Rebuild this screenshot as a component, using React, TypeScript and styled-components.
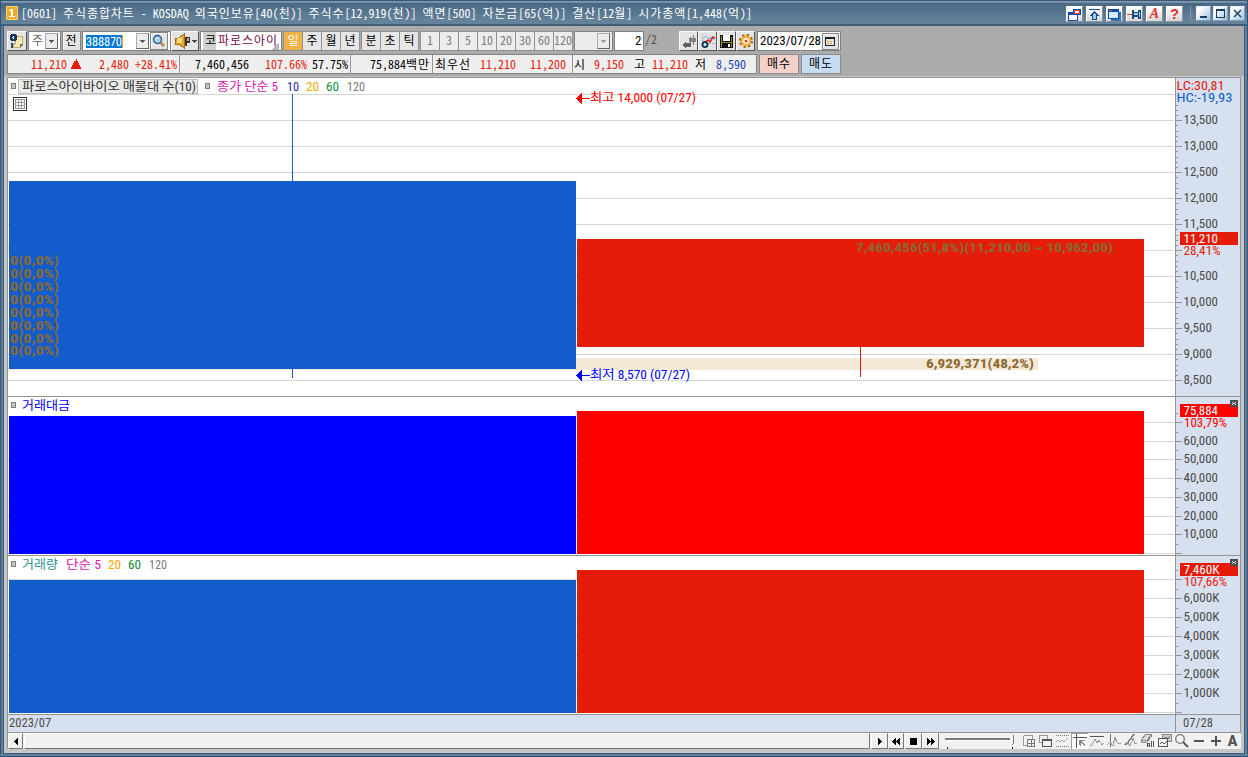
import React from 'react';
import styled, { createGlobalStyle, css } from 'styled-components';

const MONO = '"Noto Sans Mono CJK KR", "Noto Sans CJK KR", monospace';
const COND = '"Roboto Condensed", Roboto, "Noto Sans CJK KR", sans-serif';
const RED = '#e61c0a';
const BLUE = '#125ccb';

const GlobalStyle = createGlobalStyle`
  * { box-sizing: border-box; }
  body { margin: 0; overflow: hidden; font: 12px/18px ${MONO}; color: #000; }
  svg { display: block; flex: none; }
  svg text { font-family: ${COND}; font-size: 12.5px; white-space: pre; }
`;

/* ---------- window ---------- */
const Window = styled.div`
  width: 1248px;
  height: 757px;
  display: flex;
  flex-direction: column;
  padding: 0 4px 4px 4px;
  background: linear-gradient(90deg, #35536f 0, #35536f 1px, #5f7e99 1px, #5f7e99 3px, #3f5d79 3px, #3f5d79 1245px, #5f7e99 1245px, #5f7e99 1247px, #35536f 1247px);
  box-shadow: inset 0 -1px #35536f, inset 0 -3px #5f7e99;
`;
const TitleBar = styled.header`
  height: 26px;
  margin: 0 -3px;
  padding: 5px 3px 0 5px;
  flex: none;
  display: flex;
  background: linear-gradient(180deg, #3c5772 0, #3c5772 1px, #8299b0 1px, #6f8aa4 3px, #486783 3px, #648299 20px, #64839b 24px, #3f5e79 24px);
`;
const TitleText = styled.h1`
  margin: -1px auto 0 3px;
  font: 12px/18px ${MONO};
  color: #fff;
  white-space: pre;
`;
const TitleButtons = styled.div`
  display: flex;
  gap: 3px;
  padding-top: 1px;
`;
const TitleButton = styled.button`
  width: 17px;
  height: 16px;
  padding: 0;
  display: grid;
  place-items: center;
  border: 1px solid #fff;
  border-right-color: #8a9299;
  border-bottom-color: #8a9299;
  background: linear-gradient(#fff, #d4d6d8);
`;
const TitleGlyph = styled.b<{ $italic?: boolean }>`
  color: #e8302a;
  font: ${p => (p.$italic ? 'italic' : 'normal')} bold ${p => (p.$italic ? 14 : 15)}px/14px ${p => (p.$italic ? '"Liberation Serif", serif' : '"Liberation Sans", sans-serif')};
`;
const TitleSeparator = styled.i`
  width: 1px;
  height: 14px;
  margin: 0 2px 0 4px;
  background: #8d9aa6;
`;
const SystemButton = styled(TitleButton)`
  width: 15px;
  height: 15px;
  margin-right: -1px;
  background: linear-gradient(135deg, #fff 20%, #9fc0dd);
  border-color: #e6f0f8 #7f9db8 #7f9db8 #e6f0f8;
`;
const Body = styled.main`
  flex: 1;
  min-height: 0;
  display: flex;
  flex-direction: column;
  background: #c6c6c6;
`;

/* ---------- toolbars ---------- */
const Toolbars = styled.div`
  height: 50px;
  padding: 5px 3px 0;
  display: flex;
  flex-direction: column;
  gap: 3px;
  background: #ababab;
`;
const Toolbar = styled.div`
  height: 20px;
  display: flex;
`;
const bevel = css`
  border: 1px solid #f8f8f8;
  border-right-color: #555;
  border-bottom-color: #555;
`;
const IconButton = styled.button<{ $w?: number; $h?: number; $ml?: number; $plain?: boolean }>`
  width: ${p => p.$w ?? 19}px;
  height: ${p => p.$h ?? 20}px;
  flex: none;
  margin-left: ${p => p.$ml ?? 0}px;
  padding: 0;
  display: flex;
  align-items: center;
  justify-content: center;
  background: #e4e4e4;
  ${p => (p.$plain ? css`border: 1px solid #858585; box-shadow: inset 1px 1px #f5f5f5;` : bevel)}
`;
const Field = styled.div<{ $w: number; $ml?: number; $bg?: string }>`
  width: ${p => p.$w}px;
  height: 20px;
  flex: none;
  margin-left: ${p => p.$ml ?? 0}px;
  padding: 0 2px;
  display: flex;
  align-items: center;
  background: ${p => p.$bg ?? '#fff'};
  border: 1px solid #808080;
  white-space: nowrap;
`;
const DropButton = styled.button`
  width: 13px;
  height: 16px;
  margin-left: auto;
  padding: 0;
  display: grid;
  place-items: center;
  background: #ececec;
  border: 1px solid #aaa;
  border-right-color: #666;
  border-bottom-color: #666;
`;
const TextBase = styled.span<{ $c?: string; $ml?: number; $cond?: boolean }>`
  color: ${p => p.$c ?? '#000'};
  margin-left: ${p => p.$ml ?? 0}px;
  padding-bottom: 2px;
  font: 12px/16px ${MONO};
  ${p => p.$cond && css`font-family: ${COND}; font-size: 13px; padding-bottom: 1px;`}
`;
const FullWidth = styled.span`
  letter-spacing: 0.92px;
`;
const Selected = styled.span`
  width: 37px;
  height: 13px;
  margin-left: 1px;
  background: #0078d7;
  color: #fff;
  font: 12.5px/14px ${COND};
  letter-spacing: -0.2px;
  border-right: 1px solid #ff9a3c;
`;
const Market = styled.span`
  width: 16px;
  height: 18px;
  margin-right: 2px;
  padding-left: 2px;
  background: #d0d0d0;
  line-height: 16px;
`;
const StockName = styled.span`
  width: 61px;
  height: 18px;
  flex: none;
  color: #7a0a46;
  line-height: 16px;
  background: linear-gradient(135deg, transparent 0, transparent calc(100% - 5px), #b8b8b8 calc(100% - 5px));
`;
const Tabs = styled.div<{ $ml: number }>`
  display: flex;
  margin-left: ${p => p.$ml}px;
  border: 1px solid #8f8f8f;
  border-right-width: 0;
`;
const Tab = styled.button<{ $on?: boolean; $off?: boolean }>`
  width: 19px;
  height: 18px;
  padding: 0 0 3px;
  border: 0;
  border-right: 1px solid #909090;
  background: ${p => (p.$on ? '#f0b146' : p.$off ? '#ececec' : '#e6e6e6')};
  color: ${p => (p.$on ? '#fff' : p.$off ? '#7d7d7d' : '#000')};
  font: 12px/15px ${MONO};
  white-space: nowrap;
`;
const Quote = styled.div`
  display: flex;
  width: 750px;
  border: 1px solid #858585;
  background: #efefef;
  white-space: nowrap;
  ${TextBase} { padding-bottom: 0; }
`;
const QuoteCell = styled.div<{ $w: number }>`
  width: ${p => p.$w}px;
  display: flex;
  align-items: center;
  flex: none;
  & + & { border-left: 1px solid #959595; }
`;
const OrderButton = styled.button<{ $bg: string; $ml: number }>`
  width: 40px;
  height: 20px;
  margin-left: ${p => p.$ml}px;
  padding: 0 0 2px;
  border: 1px solid #8c8c8c;
  background: ${p => p.$bg};
  font: 12px/16px ${MONO};
`;

/* ---------- chart ---------- */
const Chart = styled.section`
  margin: 1px 3px 0;
  width: 1234px;
  border: 1px solid #949494;
  border-bottom: 0;
  display: flex;
  flex-direction: column;
`;
const Panel = styled.div`
  display: grid;
  grid-template-columns: 1167px 65px;
  border-bottom: 1px solid #949494;
  background: #fff;
`;
const Axis = styled.div`
  border-left: 1px solid #949494;
  background: #d6e0ee;
`;
const DateStrip = styled.div`
  height: 18px;
  display: grid;
  grid-template-columns: 1167px 65px;
  border-bottom: 1px solid #949494;
  background: #d6e0ee;
  font: 12.5px/15px ${COND};
  color: #4b4b4b;
`;
const DateCell = styled.div<{ $line?: boolean }>`
  padding-left: ${p => (p.$line ? 7 : 1)}px;
  letter-spacing: ${p => (p.$line ? 0.15 : 0.1)}px;
  ${p => p.$line && css`border-left: 1px solid #949494;`}
`;

/* ---------- bottom bar ---------- */
const BottomBar = styled.footer`
  width: 1234px;
  height: 16px;
  margin: 0 3px;
  display: flex;
  background: #f1f1f1;
  border-left: 1px solid #949494;
`;
const ScrollButton = styled.button<{ $w: number; $ml?: number }>`
  width: ${p => p.$w}px;
  height: 16px;
  flex: none;
  margin-left: ${p => p.$ml ?? 0}px;
  padding: 0;
  display: grid;
  place-items: center;
  background: #f0f0f0;
  border: 1px solid #fff;
  border-right-color: #777;
  border-bottom-color: #777;
`;
const Thumb = styled.div`
  width: 846px;
  height: 16px;
  flex: none;
  margin-left: 1px;
  background: #f0f0f0;
  border: 1px solid #fff;
  border-right-color: #777;
  border-bottom-color: #777;
`;
const ToolButton = styled.button<{ $on?: boolean }>`
  width: 17px;
  height: 16px;
  flex: none;
  padding: 0;
  border: 0;
  display: grid;
  place-items: center;
  background: ${p => (p.$on ? '#fff' : 'transparent')};
  box-shadow: ${p => (p.$on ? 'inset 1px 1px #9a9a9a' : 'none')};
`;

/* ---------- drawings ---------- */
const Icon = ({ s = 15, h, children }: { s?: number; h?: number; children: React.ReactNode }) => (
  <svg width={s} height={h ?? s} viewBox={`0 0 ${s} ${h ?? s}`} fill="none" shapeRendering="crispEdges">{children}</svg>
);
const Arrow = ({ c = '#555' }: { c?: string }) => <Icon s={5} h={3}><path d="M0 0h5v1H4v1H3v1H2V2H1V1H0z" fill={c} /></Icon>;

const Mixed = ({ children }: { children: string }) => (
  <>{children.split(/([가-힣]+)/).map((part, i) => (i % 2 ? <FullWidth key={i}>{part}</FullWidth> : part))}</>
);
const Text = ({ children, ...rest }: { $c?: string; $ml?: number; $cond?: boolean; children: string }) => (
  <TextBase {...rest}><Mixed>{children}</Mixed></TextBase>
);

const Label = ({ x, y, w, c, bold, children }: { x: number; y: number; w: number; c: string; bold?: boolean; children: string }) => (
  <text x={x} y={y} textLength={w} lengthAdjust="spacingAndGlyphs" fill={c} fontWeight={bold ? 700 : 400}>{children}</text>
);
const Bullet = ({ x, y }: { x: number; y: number }) => <rect x={x + 0.5} y={y + 0.5} width="4" height="5" fill="#c4c4c4" stroke="#7c7c7c" />;
const Grid = ({ ys }: { ys: number[] }) => (
  <g fill="#d5d5d5">{ys.map(y => <rect key={y} x="8" y={y} width="1166" height="1" />)}</g>
);
const Ticks = ({ major, minor }: { major: number[]; minor: number[] }) => (
  <g fill="#949494">
    {major.map(y => <rect key={y} x="1176" y={y} width="6" height="1" />)}
    {minor.map(y => <rect key={y} x="1176" y={y} width="2" height="1" />)}
  </g>
);
const CloseBox = ({ y }: { y: number }) => (
  <g>
    <rect x="1230" y={y} width="8" height="7" fill="#4c4c50" />
    <path d={`M1232 ${y + 2}h1v1h2v-1h1v1h-1v1h1v1h-1v-1h-2v1h-1v-1h1v-1h-1z`} fill="#e8edf5" />
  </g>
);

const priceYs = Array.from({ length: 12 }, (_, i) => 94 + i * 26);
const priceMinor = Array.from({ length: 56 }, (_, i) => Math.round(104.6 + i * 5.2)).filter(y => y < 380 && !priceYs.includes(y));
const priceLabels: [number, string][] = [[120, '13,500'], [146, '13,000'], [172, '12,500'], [198, '12,000'], [224, '11,500'], [276, '10,500'], [302, '10,000'], [328, '9,500'], [354, '9,000'], [380, '8,500']];
const amountYs = [422, 441, 459, 478, 497, 516, 534, 553];
const amountMinor = [413, 432, 450, 469, 488, 507, 525, 544];
const volumeYs = [579, 598, 617, 636, 655, 674, 693, 712];
const volumeMinor = [570, 589, 608, 627, 646, 665, 684, 703];
const zeroYs = [265, 278, 291, 304, 317, 330, 343, 355];

const tools: React.ReactNode[] = [
  <><path d="M2.500 2.500h9v3M2.500 2.500v10h3" stroke="#999" /><path d="M6.500 6.500h7v7h-7zM10 7v7M6 10h7" stroke="#777" /></>,
  <><path d="M1.500 2.500h8v7h-8z" stroke="#999" /><path d="M4.500 6.500h9v7h-9z" fill="#f1f1f1" stroke="#555" /><path d="M4 7h9" stroke="#555" /></>,
  <><path d="M1 2.500h14M1 13.500h14" stroke="#777" strokeDasharray="1 1" /><path d="M1 9l2-2 2 2 2-2 2 2 4-4" stroke="#aaa" /></>,
  <><path d="M4.500 1v14M1 4.500h14" stroke="#555" /><path d="M7 7h6v1h-3v1h1v1h1v1h1v2h-1v-1h-1v-1h-1v-1H9v3H8v-1H7z" fill="#888" /></>,
  <><path d="M1 3.500h14" stroke="#555" /><path d="M1 13l2-1 3-6 2 4 2-3 3 5 2-2" stroke="#999" /></>,
  <><path d="M4.500 1v13" stroke="#85658a" /><path d="M1 12l3-3 3 4 2-9 2 5 2 2 2-1" stroke="#999" /></>,
  <><path d="M3 12L11 1" stroke="#85658a" strokeWidth="1.500" /><path d="M1 12l3-3 3 4 3-8 2 6 2-1" stroke="#999" /></>,
  <><path d="M6 1h5v3l-4 5H1V7z" fill="#ddd" stroke="#888" /><path d="M1 7h6l4-5M7 7v2" stroke="#888" /><path d="M7.500 10v4M9.500 10v4M7 10.500h3M7 12.500h3M11.500 8v6M13.500 8v6" stroke="#555" /></>,
  <><path d="M5.500 1.500h9v7h-9z" fill="#ccc" stroke="#888" /><path d="M6 6l3-2 2 2 2-3" stroke="#888" /><path d="M1.500 5.500h9v8h-9z" fill="#f1f1f1" stroke="#555" /><path d="M3 11l2-2 2 2 3-3" stroke="#555" /></>,
  <><circle cx="6" cy="6" r="4.300" stroke="#777" shapeRendering="auto" strokeWidth="1.300" /><path d="M9 9l5 5" stroke="#555" strokeWidth="2" shapeRendering="auto" /></>,
  <path d="M3 7h10v2H3z" fill="#555" />,
  <path d="M3 7h4V3h2v4h4v2H9v4H7V9H3z" fill="#555" />,
];
const ToolLetter = styled.b`
  font: 900 14px/16px Roboto, "Liberation Sans", sans-serif;
  color: #555;
`;

export default function App() {
  return (
    <>
      <GlobalStyle />
      <Window>
        <TitleBar>
          <svg width="12" height="16" viewBox="0 0 12 16"><path d="M.5 1.500h11v13H.5z" fill="#f0a92d" stroke="#ffd36f" /><path d="M3 5h1V4h3v7h2v1H3v-1h2V6H3z" fill="#fff" /></svg>
          <TitleText><Mixed>[0601] 주식종합차트 - KOSDAQ 외국인보유[40(천)] 주식수[12,919(천)] 액면[500] 자본금[65(억)] 결산[12월] 시가총액[1,448(억)]</Mixed></TitleText>
          <TitleButtons>
            <TitleButton><Icon s={15} h={13}><path d="M1 4h10v9H1z" fill="#0b4caa" /><path d="M2 7h8v5H2z" fill="#fff" /><path d="M6 1h8v6H6z" fill="#0b4caa" /><path d="M7 2h6v4H7z" fill="#e43b26" /><path d="M8 3h4v2H8z" fill="#fff" /></Icon></TitleButton>
            <TitleButton><Icon s={13}><path d="M1 1h11v1H1z" fill="#174b8c" /><path d="M6 3h1v1h1v1h1v1h1v1h1v1H9v4H4V8H2V7h1V6h1V5h1V4h1z" fill="#174b8c" /><path d="M6 5h1v1h1v5H5V6h1z" fill="#9bd0f2" /></Icon></TitleButton>
            <TitleButton><Icon s={15} h={13}><path d="M4 4h10v9H4z" fill="#3b6cac" /><path d="M1 1h11v10H1z" fill="#0b4caa" /><path d="M2 4h9v6H2z" fill="#d7ecfa" /><path d="M2 2h3v1H2z" fill="#f04a20" /></Icon></TitleButton>
            <TitleButton><Icon s={15} h={13}><path d="M0 6h6v1H0z" fill="#ed3b2a" /><path d="M5 2h2v2h4V2h3v9h-3V9H7v2H5z" fill="#174b7c" /><path d="M7 5h4v2H7zM12 4h1v5h-1z" fill="#9bd0f2" /></Icon></TitleButton>
            <TitleButton><TitleGlyph $italic>A</TitleGlyph></TitleButton>
            <TitleButton><TitleGlyph>?</TitleGlyph></TitleButton>
            <TitleSeparator />
            <SystemButton><Icon s={13}><path d="M3 9h7v2H3z" fill="#173c5c" /></Icon></SystemButton>
            <SystemButton><Icon s={13}><path d="M2 2h9v9H2zM3 4v6h7V4z" fillRule="evenodd" fill="#173c5c" /></Icon></SystemButton>
            <SystemButton><Icon s={13}><path d="M3 3l7 7M10 3l-7 7" stroke="#173c5c" strokeWidth="1.400" shapeRendering="auto" /></Icon></SystemButton>
          </TitleButtons>
        </TitleBar>
        <Body>
          <Toolbars>
            <Toolbar>
              <IconButton $w={20}><Icon s={16}><path d="M6 3h8v9l-3 3H4v-4l2-1z" fill="#c9a765" /><path d="M7 4h6v7l-3 3H5v-2l2-1z" fill="#fbe6b4" /><path d="M11 11h3l-3 4z" fill="#5f6f84" /><path d="M2 1h5v1h1v5H7v1H2V7H1V2h1z" fill="#123a66" /><path d="M3 4h1V3h1v3H4V5H3z" fill="#fff" /><path d="M2 10h2v5H2z" fill="#244f7c" /></Icon></IconButton>
              <Field $w={33} $ml={1}><Text $c="#666" $ml={1}>주</Text><DropButton><Arrow /></DropButton></Field>
              <IconButton $ml={1} $w={19} $plain><Text>전</Text></IconButton>
              <Field $w={89} $ml={1}>
                <Selected>388870</Selected>
                <DropButton><Arrow /></DropButton>
                <IconButton $w={18} $h={18} $ml={1} $plain><Icon s={14}><path d="M8 8l4 4" stroke="#b59058" strokeWidth="3" shapeRendering="auto" /><circle cx="5.500" cy="5.500" r="4" fill="#a9d0ee" stroke="#24598c" strokeWidth="1.300" shapeRendering="auto" /><path d="M4 4h2" stroke="#fff" /></Icon></IconButton>
              </Field>
              <IconButton $w={28}><Icon s={24} h={16}><path d="M2 5h4l5-4v14l-5-4H2z" fill="#eca42c" stroke="#a96d13" /><path d="M4 6l5-2v6H4z" fill="#ffdb83" /><path d="M12 4h5v6h-3v3h-2z" fill="#443529" /><path d="M14 5h2v3h-2z" fill="#b8aa9c" /><path d="M19 7h5v1h-1v1h-1v1h-1V9h-1V8h-1z" fill="#444" /></Icon></IconButton>
              <Field $w={82} $ml={1}><Market>코</Market><StockName><Mixed>파로스아이</Mixed></StockName></Field>
              <Tabs $ml={1}><Tab $on>일</Tab><Tab>주</Tab><Tab>월</Tab><Tab>년</Tab></Tabs>
              <Tabs $ml={1}><Tab>분</Tab><Tab>초</Tab><Tab>틱</Tab></Tabs>
              <Tabs $ml={1}>{['1', '3', '5', '10', '20', '30', '60', '120'].map(n => <Tab key={n} $off>{n}</Tab>)}</Tabs>
              <Field $w={39} $ml={1} $bg="#ececec"><DropButton><Arrow c="#999" /></DropButton></Field>
              <Field $w={30} $ml={1}><Text $ml={18} $cond>2</Text></Field>
              <Text $ml={1} $c="#555">/2</Text>
              <IconButton $ml={22}><Icon s={16}><path d="M8 5h7v4H8z" fill="#8c8c8c" /><path d="M1 12l4-4v2h5v4H5v2z" fill="#606060" /><path d="M12 2h1v10h-1zM9 4h1v6H9z" fill="#777" /></Icon></IconButton>
              <IconButton><Icon s={16}><path d="M2.500 1v9M2 10.500h13" stroke="#999" strokeDasharray="1 1" /><path d="M3 6l3-3 3 3 3-2 3 3" stroke="#6eaadc" /><path d="M5 9l3-2 2 2 3-5 2 1" stroke="#e02318" strokeWidth="1.500" shapeRendering="auto" /><circle cx="5" cy="11.500" r="2.500" fill="#fff" stroke="#12395f" strokeWidth="2" shapeRendering="auto" /></Icon></IconButton>
              <IconButton><Icon s={15}><path d="M1 1h13v13H1z" fill="#111" /><path d="M4 1h7v6H4z" fill="#fff" /><path d="M2 2h1v11H2zM12 3h1v10h-1zM3 8h9v1H3z" fill="#8b8b2a" /><path d="M9 10h2v3H9z" fill="#fff" /></Icon></IconButton>
              <IconButton><Icon s={16}><circle cx="8" cy="8" r="6" stroke="#9b5d0a" strokeWidth="2" strokeDasharray="2.400 2.312" shapeRendering="auto" /><circle cx="8" cy="8" r="4.200" fill="#fff" stroke="#f5ae38" strokeWidth="2.500" shapeRendering="auto" /><circle cx="8" cy="8" r="1.500" fill="#d54420" shapeRendering="auto" /></Icon></IconButton>
              <Field $w={84} $ml={2}>
                <Text $cond>2023/07/28</Text>
                <IconButton $w={17} $h={17} $ml={1} $plain><Icon s={11}><path d="M0 1h10v9H0zM1 3v6h8V3z" fillRule="evenodd" fill="#222" /><path d="M2 5h2v1H2zM5 5h2v1H5zM2 7h2v1H2zM5 7h2v1H5z" fill="#ed9a35" /></Icon></IconButton>
              </Field>
            </Toolbar>
            <Toolbar>
              <Quote>
                <QuoteCell $w={171}>
                  <Text $ml={23} $c={RED}>11,210</Text>
                  <Icon s={16} h={10}><path d="M9 0h1v2h1v2h1v2h1v2h1v2H4V8h1V6h1V4h1V2h2z" fill={RED} /></Icon>
                  <Text $ml={16} $c={RED}>2,480</Text><Text $ml={6} $c={RED}>+28.41%</Text>
                </QuoteCell>
                <QuoteCell $w={171}><Text $ml={15}>7,460,456</Text><Text $ml={16} $c={RED}>107.66%</Text><Text $ml={5}>57.75%</Text></QuoteCell>
                <QuoteCell $w={82}><Text $ml={19}>75,884백만</Text></QuoteCell>
                <QuoteCell $w={140}><Text $ml={2}>최우선</Text><Text $ml={9} $c={RED}>11,210</Text><Text $ml={14} $c={RED}>11,200</Text></QuoteCell>
                <QuoteCell $w={184}>
                  <Text $ml={1}>시</Text><Text $ml={8} $c={RED}>9,150</Text><Text $ml={10}>고</Text><Text $ml={6} $c={RED}>11,210</Text>
                  <Text $ml={7}>저</Text><Text $ml={9} $c="#1c47b8">8,590</Text>
                </QuoteCell>
              </Quote>
              <OrderButton $bg="#f5cfc9" $ml={2}><Mixed>매수</Mixed></OrderButton>
              <OrderButton $bg="#c6dcf2" $ml={2}><Mixed>매도</Mixed></OrderButton>
            </Toolbar>
          </Toolbars>

          <Chart>
            <Panel>
              <svg width="1167" height="318" viewBox="8 78 1167 318" shapeRendering="crispEdges">
                <Grid ys={priceYs} />
                <rect x="8" y="242" width="1" height="12" fill="#f5e8d6" />
                <rect x="8" y="358" width="1030" height="12" fill="#f5e8d6" />
                <rect x="9" y="181" width="567" height="188" fill={BLUE} />
                <rect x="292" y="94" width="1" height="284" fill={BLUE} />
                <rect x="577" y="239" width="567" height="108" fill={RED} />
                <rect x="860" y="346" width="1" height="31" fill={RED} />
                {zeroYs.map(y => <Label key={y} x={10} y={y} w={49} c="#8a6a32" bold>0(0,0%)</Label>)}
                <Label x={856} y={252} w={257} c="#8a6a32" bold>7,460,456(51,8%)(11,210,00 ~ 10,962,00)</Label>
                <Label x={926} y={368} w={108} c="#8a6a32" bold>6,929,371(48,2%)</Label>
                <Bullet x={11} y={83} />
                <rect x="18.500" y="79.500" width="179" height="14" fill="#ebebe9" stroke="#bdbdbd" />
                <Label x={22} y={91} w={174} c="#333">파로스아이바이오 매물대 수(10)</Label>
                <Bullet x={205} y={83} />
                <Label x={217} y={91} w={61} c="#d818b0">종가 단순 5</Label>
                <Label x={287} y={91} w={12} c="#1428a8">10</Label>
                <Label x={306} y={91} w={13} c="#f0a800">20</Label>
                <Label x={326} y={91} w={13} c="#0c8c38">60</Label>
                <Label x={347} y={91} w={18} c="#7c7c7c">120</Label>
                <rect x="13.500" y="97.500" width="13" height="13" fill="#fff" stroke="#333" />
                <path d="M15.500 99.500h9v9h-9zM18.500 99v10M21.500 99v10M15 102.500h10M15 105.500h10" fill="none" stroke="#999" />
                <path d="M576 98.500l6-6v5.500h8v1h-8v5.500z" fill="#f00" />
                <Label x={590} y={102} w={106} c="#f00">최고 14,000 (07/27)</Label>
                <path d="M576 375.500l6-6v5.500h8v1h-8v5.500z" fill="#00f" />
                <Label x={590} y={379} w={100} c="#00f">최저 8,570 (07/27)</Label>
              </svg>
              <Axis>
                <svg width="64" height="318" viewBox="1176 78 64 318" shapeRendering="crispEdges">
                  <Ticks major={priceYs.slice(1)} minor={priceMinor} />
                  {priceLabels.map(([y, t]) => <Label key={t} x={1183.500} y={y + 4} w={t.length === 6 ? 34.500 : 28.500} c="#4b4b4b">{t}</Label>)}
                  <Label x={1176.500} y={90} w={48} c={RED}>LC:30,81</Label>
                  <Label x={1176.500} y={102} w={56} c={BLUE}>HC:-19,93</Label>
                  <rect x="1180" y="232" width="58" height="13" fill={RED} />
                  <Label x={1183.500} y={243} w={34.500} c="#fff">11,210</Label>
                  <Label x={1183.500} y={255} w={37} c={RED}>28,41%</Label>
                </svg>
              </Axis>
            </Panel>
            <Panel>
              <svg width="1167" height="158" viewBox="8 397 1167 158" shapeRendering="crispEdges">
                <Grid ys={amountYs} />
                <rect x="9" y="416" width="567" height="138" fill="#00f" />
                <rect x="577" y="411" width="567" height="143" fill="#f00" />
                <Bullet x={11} y={402} />
                <Label x={22} y={410} w={48} c="#00f">거래대금</Label>
              </svg>
              <Axis>
                <svg width="64" height="158" viewBox="1176 397 64 158" shapeRendering="crispEdges">
                  <Ticks major={amountYs} minor={amountMinor} />
                  {[60, 50, 40, 30, 20, 10].map((n, i) => <Label key={n} x={1183.500} y={amountYs[i + 1] + 4} w={34.500} c="#4b4b4b">{`${n},000`}</Label>)}
                  <rect x="1180" y="404" width="58" height="13" fill="#f00" />
                  <Label x={1183.500} y={415} w={34.500} c="#fff">75,884</Label>
                  <Label x={1184} y={427} w={43} c="#f00">103,79%</Label>
                  <CloseBox y={400} />
                </svg>
              </Axis>
            </Panel>
            <Panel>
              <svg width="1167" height="158" viewBox="8 556 1167 158" shapeRendering="crispEdges">
                <Grid ys={volumeYs} />
                <rect x="9" y="580" width="567" height="133" fill={BLUE} />
                <rect x="577" y="570" width="567" height="143" fill={RED} />
                <Bullet x={11} y={561} />
                <Label x={22} y={569} w={36} c="#2c9494">거래량</Label>
                <Label x={66} y={569} w={35} c="#d818b0">단순 5</Label>
                <Label x={108} y={569} w={13} c="#f0a800">20</Label>
                <Label x={128} y={569} w={13} c="#0c8c38">60</Label>
                <Label x={149} y={569} w={18} c="#7c7c7c">120</Label>
              </svg>
              <Axis>
                <svg width="64" height="158" viewBox="1176 556 64 158" shapeRendering="crispEdges">
                  <Ticks major={volumeYs} minor={volumeMinor} />
                  {[6, 5, 4, 3, 2, 1].map((n, i) => <Label key={n} x={1183.500} y={volumeYs[i + 1] + 4} w={36} c="#4b4b4b">{`${n},000K`}</Label>)}
                  <rect x="1180" y="563" width="58" height="13" fill={RED} />
                  <Label x={1183.500} y={574} w={36} c="#fff">7,460K</Label>
                  <Label x={1184} y={586} w={43} c={RED}>107,66%</Label>
                  <CloseBox y={559} />
                </svg>
              </Axis>
            </Panel>
            <DateStrip><DateCell>2023/07</DateCell><DateCell $line>07/28</DateCell></DateStrip>
          </Chart>

          <BottomBar>
            <ScrollButton $w={15}><Icon s={4} h={7}><path d="M4 0v7H3V6H2V5H1V4H0V3h1V2h1V1h1V0z" fill="#000" /></Icon></ScrollButton>
            <Thumb />
            <ScrollButton $w={17} $ml={1}><Icon s={4} h={7}><path d="M0 0h1v1h1v1h1v1h1v1H3v1H2v1H1v1H0z" fill="#000" /></Icon></ScrollButton>
            <ScrollButton $w={16}><Icon s={8} h={7}><path d="M4 0v7L0 3.500zM8 0v7L4 3.500z" fill="#000" /></Icon></ScrollButton>
            <ScrollButton $w={17} $ml={1}><Icon s={7} h={7}><path d="M0 0h7v7H0z" fill="#000" /></Icon></ScrollButton>
            <ScrollButton $w={17}><Icon s={8} h={7}><path d="M0 0v7l4-3.500zM4 0v7l4-3.500z" fill="#000" /></Icon></ScrollButton>
            <svg width="81" height="16" viewBox="939 733 81 16" shapeRendering="crispEdges">
              <rect x="945" y="738" width="66" height="2" fill="#7a7a7a" /><rect x="945" y="740" width="66" height="1" fill="#fff" />
              <path d="M1010 735h4v8l-2 3-2-3z" fill="#f4f4f4" /><path d="M1013 735h1v8l-2 3v-1l1-2z" fill="#777" />
              <path d="M947 747h1v2h-1zM1012 747h1v2h-1z" fill="#222" />
            </svg>
            {tools.map((t, i) => <ToolButton key={i} $on={i === 3}><Icon s={16}>{t}</Icon></ToolButton>)}
            <ToolButton><ToolLetter>A</ToolLetter></ToolButton>
          </BottomBar>
        </Body>
      </Window>
    </>
  );
}
